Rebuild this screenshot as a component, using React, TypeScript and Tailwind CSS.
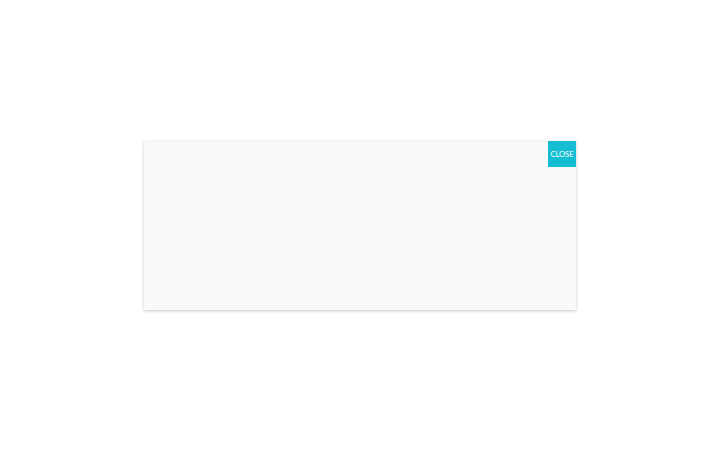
import React from 'react';

const App: React.FC = () => {
  return (
    <div className="flex h-screen w-full items-center justify-center bg-white" style={{ fontFamily: 'Lato, "Open Sans", sans-serif' }}>
      <div className="relative h-[169px] w-[432px] bg-[#f9f9f9] shadow-[0_1px_3px_rgba(0,0,0,0.22)]">
        <button className="absolute right-0 top-0 flex h-[26px] w-[28px] items-center justify-center bg-[#14bdd1] pt-[2px] text-[7.5px] uppercase leading-none text-white">
          Close
        </button>
      </div>
    </div>
  );
};

export default App;
